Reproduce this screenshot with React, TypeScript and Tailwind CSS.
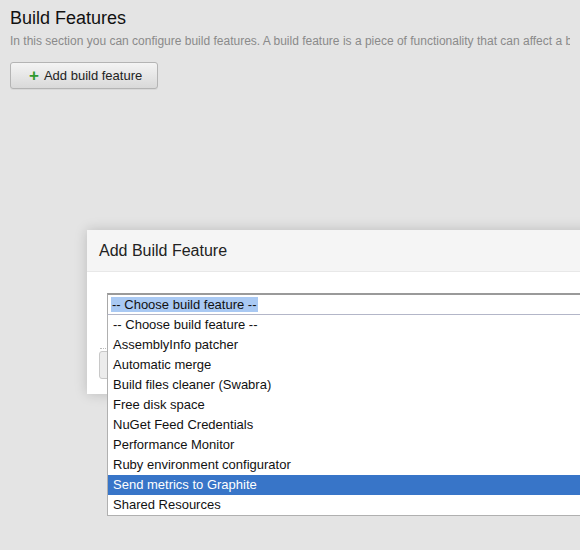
import React from "react";

const options = [
  "-- Choose build feature --",
  "AssemblyInfo patcher",
  "Automatic merge",
  "Build files cleaner (Swabra)",
  "Free disk space",
  "NuGet Feed Credentials",
  "Performance Monitor",
  "Ruby environment configurator",
  "Send metrics to Graphite",
  "Shared Resources",
];

export default function App() {
  return (
    <div className="relative w-[580px] h-[550px] overflow-hidden bg-[#e4e4e4] font-['Liberation_Sans',Arial,sans-serif] text-[#222]">
      <div className="px-[10px] pt-[7px]">
        <h1 className="text-[18px] leading-[22px] text-[#111]">Build Features</h1>
        <p className="mt-[5px] overflow-hidden whitespace-nowrap text-[12px] leading-[14px] text-[#8a8a8a]">
          In this section you can configure build features. A build feature is a piece of functionality that can affect a build in different ways.
        </p>
        <button className="mt-[14px] flex h-[27px] w-[148px] items-center gap-[5px] rounded-[3px] border border-[#b4b4b4] bg-gradient-to-b from-[#f4f4f4] to-[#d9d9d9] pl-[18px] text-[13px] text-[#222] shadow-[0_1px_0_rgba(0,0,0,0.05)]">
          <span className="text-[17px] font-bold leading-none text-[#2f9a2f]">+</span>
          <span>Add build feature</span>
        </button>
      </div>

      <div className="absolute left-[87px] top-[230px] h-[164px] w-[520px] bg-white shadow-[0_0_12px_rgba(0,0,0,0.18)]">
        <div className="flex h-[42px] items-center border-b border-[#e8e8e8] bg-[#f5f5f5] pl-[12px] text-[16px] text-[#222]">
          Add Build Feature
        </div>
        <div className="pl-[20px] pt-[21px]">
          <div className="flex h-[22px] w-[480px] items-center border-t-2 border-l border-b border-t-[#9a9a9a] border-l-[#a8a8a8] border-b-[#b3b6c8] pl-[3px]">
            <span className="bg-[#a9c9f3] px-[1px] text-[13px] leading-[15px] text-[#111]">-- Choose build feature --</span>
          </div>
        </div>
        <div className="ml-[13px] mt-[33px] w-[10px] border-t border-dotted border-[#bbb]" />
        <div className="ml-[12px] mt-[2px] h-[28px] w-[40px] rounded-[3px] border border-[#c8c8c8] bg-[#ececec]" />
      </div>

      <ul className="absolute left-[107px] top-[315px] w-[480px] border-l border-b border-[#b0b0b0] bg-white">
        {options.map((o) => (
          <li
            key={o}
            className={
              o === "Send metrics to Graphite"
                ? "h-[20px] pl-[5px] text-[13px] leading-[20px] bg-[#3875c8] text-white"
                : "h-[20px] pl-[5px] text-[13px] leading-[20px] text-[#111]"
            }
          >
            {o}
          </li>
        ))}
      </ul>
    </div>
  );
}
